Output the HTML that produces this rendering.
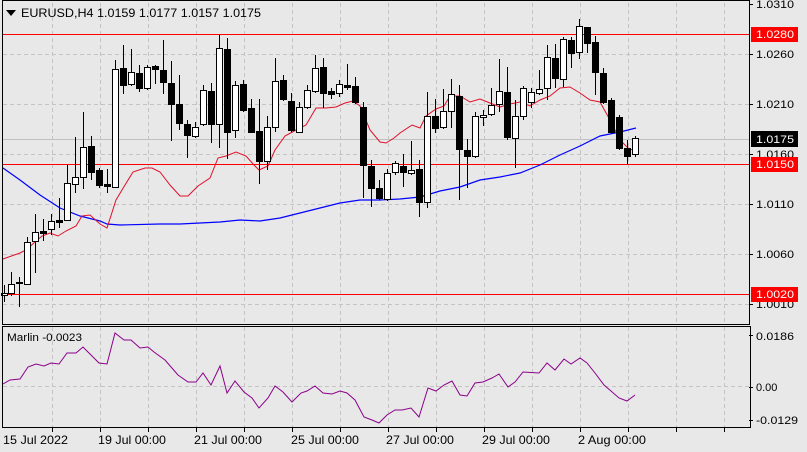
<!DOCTYPE html>
<html><head><meta charset="utf-8"><style>
html,body{margin:0;padding:0;background:#e8e8e8;}
svg{display:block;font-family:"Liberation Sans",sans-serif;}
</style></head><body>
<svg id="s" width="807" height="452" xmlns="http://www.w3.org/2000/svg">
<rect width="807" height="452" fill="#e8e8e8"/>
<g id="grid" stroke="#c4c4c4" stroke-dasharray="4,3" stroke-width="1"></g>
<line x1="3" y1="139.5" x2="749" y2="139.5" stroke="#c0c0c0"/>
<line x1="3" y1="34.5" x2="749" y2="34.5" stroke="#ff0000"/>
<line x1="3" y1="164.5" x2="749" y2="164.5" stroke="#ff0000"/>
<line x1="3" y1="294.5" x2="749" y2="294.5" stroke="#ff0000"/>
<polyline fill="none" stroke="#0000ff" stroke-width="1.2" points="3,168 20,180 40,195 60,208 80,216 100,221 107,224 120,225 160,224 180,224 200,223 220,222 240,220 260,221 280,218 300,213 320,208 340,203 360,200 380,200 400,199 420,197 440,191 460,187 480,180 500,177 520,173 540,165 560,155 580,146 600,136 620,132 636,128"/>
<polyline fill="none" stroke="#e0102a" stroke-width="1" points="3,259 20,253 26,250 35,242 42,236 50,233 58,236 66,231 76,226 82,216 90,215 100,224 107,228 116,200 125,185 133,172 145,168 152,168 160,172 170,185 180,196 188,196 198,186 210,178 218,158 226,156 236,152 246,156 254,165 259,170 268,166 275,150 285,136 296,130 306,125 316,108 326,108 336,107 345,103 353,101 360,106 370,130 380,142 386,143 394,138 400,133 412,125 420,128 426,116 436,109 444,106 450,96 460,96 470,102 480,99 490,103 500,107 510,104 520,102 530,106 540,100 550,96 560,88 570,87 580,93 590,100 600,102 610,120 620,140 630,150 638,148"/>
<g id="c"></g>
<line x1="3" y1="386.5" x2="749" y2="386.5" stroke="#c4c4c4" stroke-dasharray="4,3"/>
<polyline fill="none" stroke="#8b008b" stroke-width="1" points="3,384 10,380 20,379 28,367 36,364 44,366 51,363 59,364 67,353 76,353 83,347 93,357 99,363 107,364 115,333 124,340 131,340 140,348 148,347 154,352 165,360 178,375 188,382 196,382 203,373 211,385 220,366 227,393 235,381 244,392 252,398 259,408 268,398 275,386 283,392 292,402 301,393 307,391 315,386 323,393 332,394 340,391 347,393 355,400 364,417 372,420 379,423 387,415 395,410 402,410 411,408 419,417 428,388 436,391 444,385 452,381 460,395 467,396 475,383 483,382 492,378 499,374 508,387 515,382 523,372 539,373 547,363 555,370 564,359 571,364 580,358 587,363 595,373 604,385 611,391 619,398 627,401 635,395"/>
<rect x="2.5" y="0.5" width="747" height="324" fill="none" stroke="#000"/>
<rect x="2.5" y="326.5" width="748" height="101" fill="none" stroke="#000"/>
<g id="ticks" stroke="#000"></g>
<polygon points="6,10 16,10 11,16" fill="#000"/>
<text x="21" y="17" font-size="12" fill="#000" textLength="240" lengthAdjust="spacingAndGlyphs">EURUSD,H4  1.0159 1.0177 1.0157 1.0175</text>
<text x="7" y="341" font-size="11" fill="#000" textLength="75" lengthAdjust="spacingAndGlyphs">Marlin -0.0023</text>
<g font-size="11" fill="#000">
<text x="756" y="8" textLength="38" lengthAdjust="spacingAndGlyphs">1.0310</text>
<text x="756" y="58" textLength="38" lengthAdjust="spacingAndGlyphs">1.0260</text>
<text x="756" y="108" textLength="38" lengthAdjust="spacingAndGlyphs">1.0210</text>
<text x="756" y="158" textLength="38" lengthAdjust="spacingAndGlyphs">1.0160</text>
<text x="756" y="208" textLength="38" lengthAdjust="spacingAndGlyphs">1.0110</text>
<text x="756" y="258" textLength="38" lengthAdjust="spacingAndGlyphs">1.0060</text>
<text x="756" y="308" textLength="38" lengthAdjust="spacingAndGlyphs">1.0010</text>
<text x="756" y="340" textLength="38" lengthAdjust="spacingAndGlyphs">0.0186</text>
<text x="756" y="391">0.00</text>
<text x="756" y="424" textLength="42" lengthAdjust="spacingAndGlyphs">-0.0129</text>
</g>
<rect x="751" y="27" width="47" height="15" fill="#ff0000"/>
<text x="756" y="38" font-size="11" fill="#fff" textLength="38" lengthAdjust="spacingAndGlyphs">1.0280</text>
<rect x="751" y="131" width="47" height="16" fill="#000"/>
<text x="756" y="143" font-size="11" fill="#fff" textLength="38" lengthAdjust="spacingAndGlyphs">1.0175</text>
<rect x="751" y="157" width="47" height="15" fill="#ff0000"/>
<text x="756" y="168" font-size="11" fill="#fff" textLength="38" lengthAdjust="spacingAndGlyphs">1.0150</text>
<rect x="751" y="287" width="47" height="15" fill="#ff0000"/>
<text x="756" y="298" font-size="11" fill="#fff" textLength="38" lengthAdjust="spacingAndGlyphs">1.0020</text>
<g font-size="12" fill="#000">
<text x="3" y="444" textLength="65" lengthAdjust="spacingAndGlyphs">15 Jul 2022</text>
<text x="98" y="444" textLength="68" lengthAdjust="spacingAndGlyphs">19 Jul 00:00</text>
<text x="194" y="444" textLength="68" lengthAdjust="spacingAndGlyphs">21 Jul 00:00</text>
<text x="291" y="444" textLength="68" lengthAdjust="spacingAndGlyphs">25 Jul 00:00</text>
<text x="386" y="444" textLength="68" lengthAdjust="spacingAndGlyphs">27 Jul 00:00</text>
<text x="482" y="444" textLength="68" lengthAdjust="spacingAndGlyphs">29 Jul 00:00</text>
<text x="578" y="444" textLength="68" lengthAdjust="spacingAndGlyphs">2 Aug 00:00</text>
</g>
</svg>
<script>
var NS="http://www.w3.org/2000/svg";
function el(p,t,a){var e=document.createElementNS(NS,t);for(var k in a)e.setAttribute(k,a[k]);p.appendChild(e);return e;}
var g=document.getElementById('grid');
for(var x=52;x<749;x+=48){el(g,'line',{x1:x+.5,y1:3,x2:x+.5,y2:324});el(g,'line',{x1:x+.5,y1:327,x2:x+.5,y2:427});}
[54,104,154,204,254,304].forEach(function(y){el(g,'line',{x1:3,y1:y+.5,x2:749,y2:y+.5});});
var t=document.getElementById('ticks');
[4,54,104,154,204,254,304,335,387,420].forEach(function(y){el(t,'line',{x1:749,y1:y+.5,x2:753,y2:y+.5});});
for(var x=52;x<749;x+=48){el(t,'line',{x1:x+.5,y1:428,x2:x+.5,y2:432});}
var C=[[4,285,302,293,295,1],[11,272,296,284,293,1],[19,277,307,282,283,1],[27,237,284,242,284,1],[35,214,273,232,241,1],[43,219,241,231,233,0],[51,214,235,221,229,1],[59,198,228,220,222,0],[67,165,220,183,220,1],[75,137,193,177,184,1],[83,112,189,147,177,1],[91,136,180,146,172,0],[99,168,188,170,185,0],[107,169,193,184,186,0],[115,60,187,69,187,1],[123,45,94,68,85,0],[131,49,86,72,84,1],[139,65,92,73,88,0],[147,65,90,67,88,1],[155,65,84,66,69,0],[163,40,94,70,82,0],[171,61,141,83,104,0],[179,75,130,104,123,0],[187,120,158,124,135,0],[195,122,138,127,136,1],[203,85,126,90,124,1],[211,83,143,91,124,0],[219,35,148,48,124,1],[227,38,159,49,132,0],[235,81,138,85,130,1],[243,80,112,84,110,0],[251,99,133,108,132,0],[259,99,184,131,161,0],[267,116,170,127,161,1],[275,58,132,81,127,1],[283,75,101,80,99,0],[291,93,132,101,130,0],[299,102,133,107,132,1],[307,85,109,90,107,1],[315,55,93,68,91,1],[323,58,108,67,93,0],[331,88,99,91,94,0],[339,80,97,84,93,1],[347,64,90,85,87,0],[355,77,104,86,102,0],[363,102,198,107,165,0],[371,160,207,166,188,0],[379,180,200,188,198,0],[387,169,201,173,199,1],[395,161,175,163,172,1],[403,154,187,166,172,0],[411,141,175,170,173,1],[419,160,217,169,202,0],[427,92,208,116,202,1],[435,99,133,116,128,0],[443,89,129,111,127,1],[451,79,128,94,111,1],[459,85,200,96,149,0],[467,139,188,150,156,0],[475,112,158,116,156,1],[483,110,126,115,117,1],[491,88,116,105,114,1],[499,59,112,91,104,1],[507,67,140,92,137,0],[515,100,168,116,138,1],[523,86,120,88,116,1],[531,88,108,92,102,1],[539,70,95,89,93,1],[547,45,100,57,88,1],[555,44,88,58,78,0],[563,37,87,39,79,1],[571,37,68,40,53,0],[579,19,59,26,52,1],[587,27,53,27,43,0],[595,36,95,42,72,0],[603,68,104,73,102,0],[611,98,134,100,132,0],[619,115,150,117,148,0],[627,140,164,148,156,0],[635,136,157,138,154,1]];
var c=document.getElementById('c');
C.forEach(function(d){var x=d[0]+.5;
el(c,'line',{x1:x,y1:d[1],x2:x,y2:d[2],stroke:'#000','stroke-width':1});
var h=Math.max(1,d[4]-d[3]);
el(c,'rect',{x:d[0]-3+.5,y:d[3]+.5,width:6,height:h,fill:d[5]?'#fff':'#000',stroke:'#000','stroke-width':1});});
</script>
</body></html>
